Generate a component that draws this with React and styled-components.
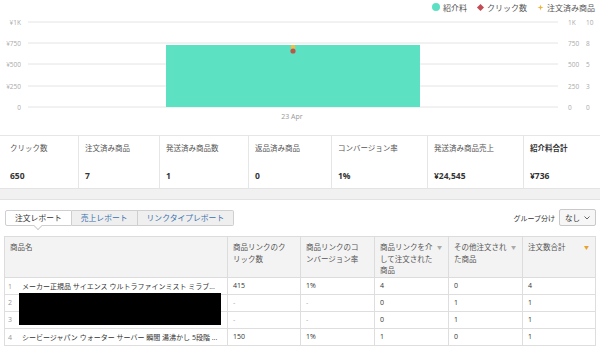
import React from "react";
import styled, { createGlobalStyle } from "styled-components";

const GlobalStyle = createGlobalStyle`
  html, body { margin: 0; padding: 0; background: #fff; }
  body {
    font-family: "Open Sans", "Noto Sans CJK JP", sans-serif;
    color: #444;
    width: 600px;
    overflow: hidden;
  }
`;

const stats = [
  { label: "クリック数", value: "650", w: "79px" },
  { label: "注文済み商品", value: "7", w: "81px" },
  { label: "発送済み商品数", value: "1", w: "89px" },
  { label: "返品済み商品", value: "0", w: "83px" },
  { label: "コンバージョン率", value: "1%", w: "96px" },
  { label: "発送済み商品売上", value: "¥24,545", w: "96px" },
  { label: "紹介料合計", value: "¥736", w: "76px", strong: true },
];

const columns = [
  { title: "商品名", w: "223px" },
  { title: "商品リンクのクリック数", w: "73px" },
  { title: "商品リンクのコンバージョン率", w: "74px" },
  { title: "商品リンクを介して注文された商品", w: "74px", sort: "gray" },
  { title: "その他注文された商品", w: "74px", sort: "gray" },
  { title: "注文数合計", w: "73px", sort: "active" },
];

const rows = [
  ["メーカー正規品 サイエンス ウルトラファインミスト ミラブ...", "415", "1%", "4", "0", "4"],
  ["", "-", "-", "0", "1", "1"],
  ["", "-", "-", "0", "1", "1"],
  ["シービージャパン ウォーター サーバー 瞬間 湯沸かし 5段階 ...", "150", "1%", "1", "0", "1"],
];

const gridY = [8, 29, 50, 72, 93];
const leftLabels = ["¥1K", "¥750", "¥500", "¥250", "0"];
const rightA = ["1K", "750", "500", "250", "0"];
const rightB = ["10", "8", "5", "3", "0"];

const ChartArea = styled.section`
  height: 135px;
  display: flex;
  flex-direction: column;
`;

const Legend = styled.div`
  height: 14px;
  display: flex;
  justify-content: flex-end;
  align-items: center;
  gap: 10px;
  padding-right: 5px;
  font-size: 8px;
  color: #555;
`;

const LegendItem = styled.span`
  display: flex;
  align-items: center;
  gap: 3px;
`;

const Dot = styled.i`
  width: 8px;
  height: 8px;
  border-radius: 50%;
  background: #5ce0c3;
`;

const Diamond = styled.i`
  width: 5px;
  height: 5px;
  margin: 0 1px;
  transform: rotate(45deg);
  background: #c44a55;
`;

const Chart = () => (
  <svg width="600" height="121" style={{ display: "block" }}>
    {gridY.map((y, i) => (
      <g key={y}>
        <line x1="28" x2="558" y1={y} y2={y} stroke="#e4e4e4" strokeWidth="1" />
        <text x="21" y={y + 2.5} fontSize="6.5" fill="#aaa" textAnchor="end">{leftLabels[i]}</text>
        <text x="568" y={y + 2.5} fontSize="6.5" fill="#aaa">{rightA[i]}</text>
        <text x="586" y={y + 2.5} fontSize="6.5" fill="#aaa">{rightB[i]}</text>
      </g>
    ))}
    <rect x="166" y="31" width="254" height="62" fill="#5ce1c2" />
    <circle cx="293" cy="33" r="2.3" fill="#e8c04c" />
    <circle cx="293" cy="37" r="2.6" fill="#b9574a" />
    <text x="292" y="104.5" fontSize="7" fill="#999" textAnchor="middle">23 Apr</text>
  </svg>
);

const Stats = styled.div`
  display: flex;
  height: 52px;
  border-top: 1px solid #e6e6e6;
  border-bottom: 1px solid #e3e3e3;
`;

const StatCell = styled.div`
  width: ${(p) => p.$w};
  box-sizing: border-box;
  padding: 7px 6px 7px ${(p) => (p.$first ? "10px" : "6px")};
  display: flex;
  flex-direction: column;
  justify-content: space-between;
  border-right: 1px solid #e6e6e6;
  &:last-child { border-right: none; flex: 1; }
`;

const StatLabel = styled.div`
  font-size: 7.5px;
  line-height: 10px;
  color: ${(p) => (p.$strong ? "#333" : "#555")};
  font-weight: ${(p) => (p.$strong ? 600 : 400)};
`;

const StatValue = styled.div`
  font-size: 8.5px;
  line-height: 10px;
  font-weight: 700;
  color: #333;
`;

const Band = styled.div`
  height: 10px;
  background: #f1f1f1;
  border-bottom: 1px solid #e2e2e2;
`;

const Report = styled.section`
  padding: 9px 4px 0 4px;
`;

const Toolbar = styled.div`
  height: 17px;
  display: flex;
  justify-content: space-between;
  align-items: center;
`;

const Tabs = styled.div`
  display: flex;
  margin-left: 1px;
`;

const Tab = styled.button`
  position: relative;
  height: 16px;
  padding: 0 ${(p) => p.$pad};
  font-family: "Noto Sans CJK JP", sans-serif;
  font-size: 7.8px;
  border: 1px solid #cfcfcf;
  border-left-width: ${(p) => (p.$first ? "1px" : "0")};
  border-radius: ${(p) => (p.$first ? "2px 0 0 2px" : p.$last ? "0 2px 2px 0" : "0")};
  background: ${(p) => (p.$active ? "#fff" : "#efefef")};
  color: ${(p) => (p.$active ? "#333" : "#3a70ad")};
  cursor: pointer;
  &::after {
    content: "";
    display: ${(p) => (p.$active ? "block" : "none")};
    position: absolute;
    left: 50%;
    bottom: -4px;
    width: 5px;
    height: 5px;
    margin-left: -3px;
    background: #fff;
    border-right: 1px solid #cfcfcf;
    border-bottom: 1px solid #cfcfcf;
    transform: rotate(45deg);
  }
`;

const Group = styled.div`
  display: flex;
  align-items: center;
  gap: 4px;
  font-family: "Noto Sans CJK JP", sans-serif;
  font-size: 7px;
  color: #333;
`;

const Select = styled.div`
  width: 37px;
  height: 17px;
  box-sizing: border-box;
  border: 1px solid #c9c9c9;
  border-radius: 2px;
  background: #f6f6f6;
  display: flex;
  align-items: center;
  justify-content: center;
  gap: 4px;
  font-size: 7.5px;
  color: #333;
`;

const TableWrap = styled.div`
  position: relative;
  margin-top: 10px;
`;

const Table = styled.table`
  width: 591px;
  border-collapse: collapse;
  table-layout: fixed;
  font-family: "Open Sans", "Noto Sans CJK JP", sans-serif;
`;

const Th = styled.th`
  width: ${(p) => p.$w};
  height: 38px;
  box-sizing: border-box;
  padding: 5px 14px 0 5px;
  vertical-align: top;
  text-align: left;
  font-weight: 400;
  font-size: 7.5px;
  line-height: 11.5px;
  color: #555;
  background: #f3f3f3;
  border: 1px solid #dcdcdc;
  position: relative;
`;

const SortArrow = styled.span`
  position: absolute;
  right: 6px;
  top: 5px;
  font-size: 5px;
  color: ${(p) => (p.$active ? "#e8a22a" : "#aaa")};
`;

const Td = styled.td`
  height: 17px;
  box-sizing: border-box;
  padding: 0 5px 0 ${(p) => (p.$name ? "2px" : "5px")};
  font-size: 7px;
  color: ${(p) => (p.$dim ? "#aaa" : "#333")};
  border: 1px solid #dedede;
  white-space: nowrap;
  overflow: hidden;
`;

const RowNum = styled.span`
  display: inline-block;
  width: 15px;
  padding-left: 1px;
  box-sizing: border-box;
  color: #999;
`;

const Redaction = styled.div`
  position: absolute;
  left: 15px;
  top: 57px;
  width: 202px;
  height: 32px;
  background: #000;
`;

const Plus = () => (
  <svg width="7" height="7" viewBox="0 0 7 7">
    <path d="M3.5 0.5 L4.2 2.8 L6.5 3.5 L4.2 4.2 L3.5 6.5 L2.8 4.2 L0.5 3.5 L2.8 2.8 Z" fill="#efb63f" />
  </svg>
);

const Chevron = () => (
  <svg width="6" height="4" viewBox="0 0 6 4">
    <path d="M0.5 0.5 L3 3 L5.5 0.5" fill="none" stroke="#555" strokeWidth="0.9" />
  </svg>
);

const App = () => {
  return (
    <>
      <GlobalStyle />
      <ChartArea>
        <Legend>
          <LegendItem><Dot />紹介料</LegendItem>
          <LegendItem><Diamond />クリック数</LegendItem>
          <LegendItem><Plus />注文済み商品</LegendItem>
        </Legend>
        <Chart />
      </ChartArea>
      <Stats>
        {stats.map((s, i) => (
          <StatCell key={s.label} $w={s.w} $first={i === 0}>
            <StatLabel $strong={s.strong}>{s.label}</StatLabel>
            <StatValue>{s.value}</StatValue>
          </StatCell>
        ))}
      </Stats>
      <Band />
      <Report>
        <Toolbar>
          <Tabs>
            <Tab $active $first $pad="9px">注文レポート</Tab>
            <Tab $pad="9px">売上レポート</Tab>
            <Tab $last $pad="9px">リンクタイプレポート</Tab>
          </Tabs>
          <Group>
            グループ分け
            <Select>なし <Chevron /></Select>
          </Group>
        </Toolbar>
        <TableWrap>
          <Table>
            <thead>
              <tr>
                {columns.map((c) => (
                  <Th key={c.title} $w={c.w}>
                    {c.title}
                    {c.sort && <SortArrow $active={c.sort === "active"}>▼</SortArrow>}
                  </Th>
                ))}
              </tr>
            </thead>
            <tbody>
              {rows.map((r, i) => (
                <tr key={i}>
                  <Td $name><RowNum>{i + 1}</RowNum>{r[0]}</Td>
                  {r.slice(1).map((v, j) => (
                    <Td key={j} $dim={v === "-"}>{v}</Td>
                  ))}
                </tr>
              ))}
            </tbody>
          </Table>
          <Redaction />
        </TableWrap>
      </Report>
    </>
  );
};

export default App;
